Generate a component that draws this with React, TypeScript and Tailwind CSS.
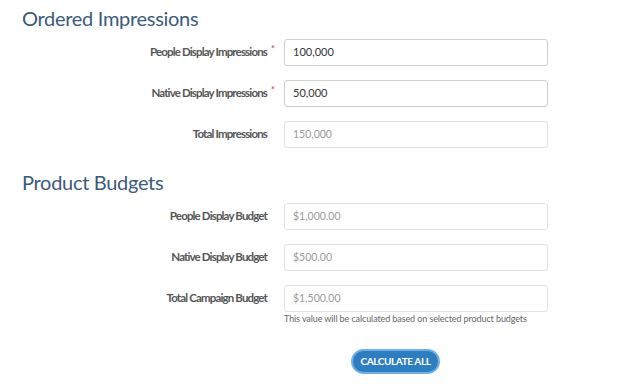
const font = { fontFamily: "Lato, 'Open Sans', sans-serif" };

type Field = { label: string; value: string; required?: boolean; muted?: boolean };

const impressions: Field[] = [
  { label: "People Display Impressions", value: "100,000", required: true },
  { label: "Native Display Impressions", value: "50,000", required: true },
  { label: "Total Impressions", value: "150,000", muted: true },
];

const budgets: Field[] = [
  { label: "People Display Budget", value: "$1,000.00", muted: true },
  { label: "Native Display Budget", value: "$500.00", muted: true },
  { label: "Total Campaign Budget", value: "$1,500.00", muted: true },
];

function Row({ field }: { field: Field }) {
  return (
    <div className="flex h-[27px] items-start">
      <div className="h-[27px] w-[284px] shrink-0 pr-[17px] pt-[5px] text-right text-[11.5px] leading-[16px]">
        <span className="relative font-bold tracking-[-0.85px] text-[#555]">
          {field.label}
          {field.required && (
            <span className="absolute -right-[7px] -top-[4px] text-[9px] text-[#d9534f]">*</span>
          )}
        </span>
      </div>
      <div
        className={
          "flex h-[27px] w-[264px] items-center rounded-[3px] border px-[8px] " +
          (field.muted
            ? "border-[#e3e3e3] text-[10.5px] text-[#9a9a9a]"
            : "border-[#cfcfcf] text-[11px] text-[#333]")
        }
      >
        {field.value}
      </div>
    </div>
  );
}

export default function App() {
  return (
    <div className="h-[387px] w-[640px] overflow-hidden bg-white pt-[6px]" style={font}>
      <h1 className="ml-[22px] text-[20px] leading-[24px] tracking-[-0.3px] text-[#3b5a7c]">Ordered Impressions</h1>
      <div className="mt-[9px] flex flex-col gap-[14px]">
        {impressions.map((f) => (
          <Row key={f.label} field={f} />
        ))}
      </div>

      <h1 className="ml-[22px] mt-[22px] text-[20px] leading-[24px] tracking-[-0.3px] text-[#3b5a7c]">Product Budgets</h1>
      <div className="mt-[9px] flex flex-col gap-[14px]">
        {budgets.map((f) => (
          <Row key={f.label} field={f} />
        ))}
      </div>
      <p className="ml-[284px] mt-[1px] text-[9px] leading-[12px] tracking-[-0.1px] text-[#666]">
        This value will be calculated based on selected product budgets
      </p>

      <div className="ml-[351px] mt-[22px]">
        <button className="h-[25px] w-[89px] rounded-full border-2 border-[#6fb0e6] bg-[#2f7dc1] text-[10px] font-bold tracking-[-0.4px] text-white">
          CALCULATE ALL
        </button>
      </div>
    </div>
  );
}
